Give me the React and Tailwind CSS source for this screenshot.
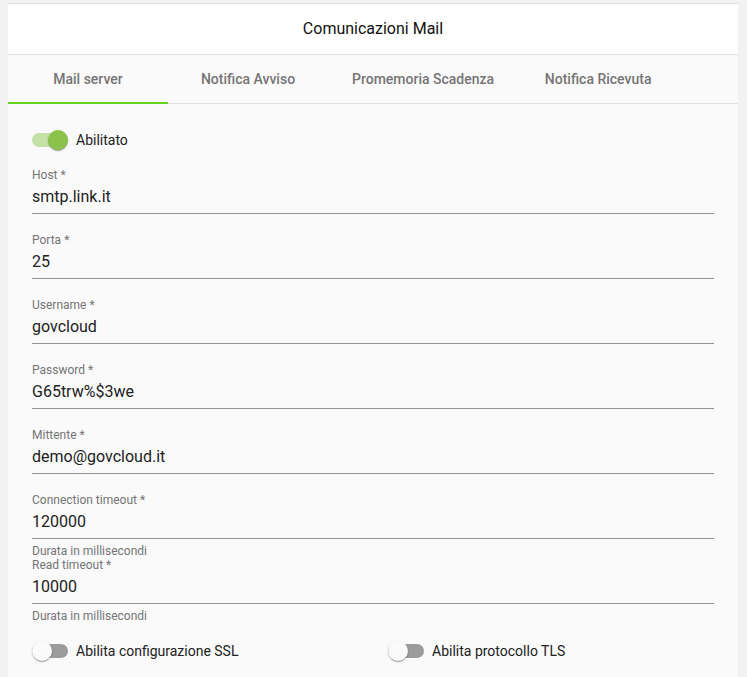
import React from "react";

function Toggle({ on, label }) {
  return (
    <div className="flex h-[24px] items-center">
      <div className="relative h-[14px] w-[36px] shrink-0">
        <div
          className={
            "absolute left-0 top-0 h-[14px] w-[36px] rounded-full " +
            (on ? "bg-[#c5e1a5]" : "bg-[#9b9b9b]")
          }
        />
        <div
          className={
            "absolute top-[-3px] h-[20px] w-[20px] rounded-full shadow-[0_2px_1px_-1px_rgba(0,0,0,0.2),0_1px_1px_0_rgba(0,0,0,0.14),0_1px_3px_0_rgba(0,0,0,0.12)] " +
            (on ? "left-[16px] bg-[#8bc34a]" : "left-0 bg-[#fafafa]")
          }
        />
      </div>
      <span className="ml-[8px] text-[14px] leading-[20px] text-[#212121]">{label}</span>
    </div>
  );
}

function Field({ label, value, hint }) {
  return (
    <div>
      <div className="h-[14px] text-[12px] leading-[14px] text-[#757575]">{label}</div>
      <div className="mt-[5px] border-b border-[#949494] pb-[6px]">
        <div className="h-[20px] text-[16px] leading-[20px] text-[#212121]">{value}</div>
      </div>
      {hint ? (
        <div className="mt-[5px] h-[14px] text-[12px] leading-[14px] text-[#757575]">{hint}</div>
      ) : (
        <div className="h-[19px]" />
      )}
    </div>
  );
}

export default function App() {
  const tabs = ["Mail server", "Notifica Avviso", "Promemoria Scadenza", "Notifica Ricevuta"];
  return (
    <div
      className="min-h-[677px] bg-[#f2f2f2] pt-[3px]"
      style={{ fontFamily: "Roboto, 'Liberation Sans', sans-serif" }}
    >
      <div className="ml-[8px] w-[730px] border-t border-[#e0e0e0] bg-[#fafafa]">
        <div className="flex h-[51px] items-center justify-center border-b border-[#e0e0e0] bg-white text-[16px] text-[#111]">
          Comunicazioni Mail
        </div>
        <div className="flex h-[49px] border-b border-[#e0e0e0]">
          {tabs.map((t, i) => (
            <div
              key={t}
              className="relative flex h-[48px] min-w-[160px] items-center justify-center px-[24px] text-[14px] font-medium text-[#757575]"
            >
              {t}
              {i === 0 && (
                <div className="absolute bottom-[-1px] left-0 h-[2px] w-full bg-[#66d41f]" />
              )}
            </div>
          ))}
        </div>
        <div className="px-[24px] pb-[14px]">
          <div className="pt-[24px]">
            <Toggle on label="Abilitato" />
          </div>
          <div className="mt-[16px]">
            <Field label="Host *" value="smtp.link.it" />
            <Field label="Porta *" value="25" />
            <Field label="Username *" value="govcloud" />
            <Field label="Password *" value="G65trw%$3we" />
            <Field label="Mittente *" value="demo@govcloud.it" />
            <Field label="Connection timeout *" value="120000" hint="Durata in millisecondi" />
            <Field label="Read timeout *" value="10000" hint="Durata in millisecondi" />
          </div>
          <div className="mt-[16px] flex">
            <div className="w-[356px]">
              <Toggle label="Abilita configurazione SSL" />
            </div>
            <div>
              <Toggle label="Abilita protocollo TLS" />
            </div>
          </div>
        </div>
      </div>
    </div>
  );
}
